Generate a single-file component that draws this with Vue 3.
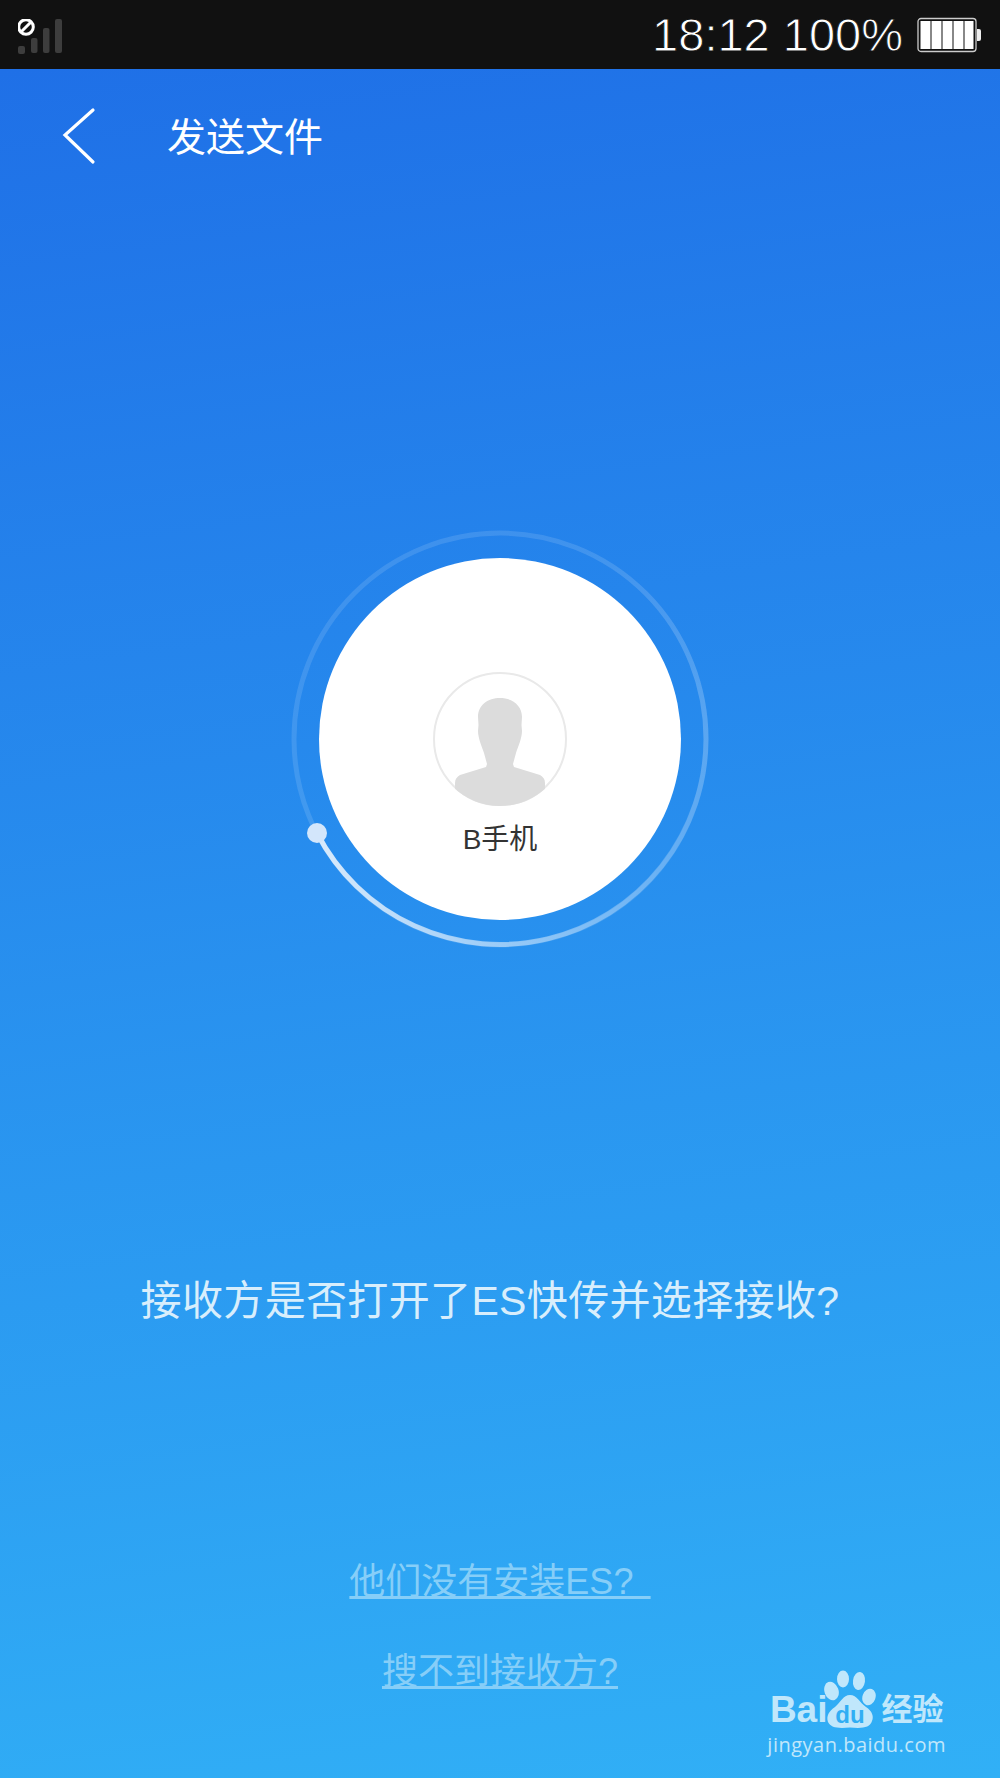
<template>
  <div class="screen">
    <div class="status-bar">
      <svg class="signal" width="60" height="50" viewBox="0 0 60 50">
        <rect x="0" y="27" width="7" height="8" rx="2" fill="#3d3d3d" />
        <rect x="13" y="19" width="6.500" height="15" rx="2" fill="#3d3d3d" />
        <rect x="25" y="9" width="6.500" height="25" rx="2" fill="#3d3d3d" />
        <rect x="37" y="0" width="7" height="34" rx="2" fill="#3d3d3d" />
        <circle cx="8" cy="8" r="7.300" fill="none" stroke="#fff" stroke-width="3" />
        <line x1="3.500" y1="12.500" x2="12.500" y2="3.500" stroke="#fff" stroke-width="3" />
      </svg>
      <div class="status-right">
        <span class="clock">18:12 100%</span>
        <svg class="battery" width="66" height="36" viewBox="0 0 66 36">
          <rect x="1" y="1.500" width="58" height="33" rx="3" fill="none" stroke="#ccc" stroke-width="1.300" />
          <rect x="3.500" y="4" width="10" height="28" fill="#fff" />
          <rect x="14.500" y="4" width="10" height="28" fill="#fff" />
          <rect x="25.500" y="4" width="10" height="28" fill="#fff" />
          <rect x="36.500" y="4" width="10" height="28" fill="#fff" />
          <rect x="47.500" y="4" width="9" height="28" fill="#fff" />
          <path d="M60 12h2a2 2 0 0 1 2 2v8a2 2 0 0 1-2 2h-2z" fill="#eee" />
        </svg>
      </div>
    </div>

    <div class="page">
      <div class="header">
        <svg class="back" width="34" height="58" viewBox="0 0 34 58">
          <path d="M31 3 L3 28 L31 55" fill="none" stroke="#fff" stroke-width="3.200" stroke-linecap="round" />
        </svg>
        <span class="title">发送文件</span>
      </div>

      <div class="dial">
        <svg class="dial-ring" width="430" height="430" viewBox="0 0 430 430">
          <defs>
            <linearGradient id="sweep" gradientUnits="userSpaceOnUse" x1="32" y1="0" x2="421" y2="0">
              <stop offset="0" stop-color="#fff" stop-opacity="0.8" />
              <stop offset="0.5" stop-color="#fff" stop-opacity="0.45" />
              <stop offset="1" stop-color="#fff" stop-opacity="0.14" />
            </linearGradient>
            <linearGradient id="fade" gradientUnits="userSpaceOnUse" x1="0" y1="215" x2="0" y2="9">
              <stop offset="0" stop-color="#fff" stop-opacity="0.14" />
              <stop offset="1" stop-color="#fff" stop-opacity="0" />
            </linearGradient>
          </defs>
          <circle cx="215" cy="215" r="206" fill="none" stroke="#fff" stroke-opacity="0.12" stroke-width="5" />
          <path d="M421 215 A206 206 0 0 0 215 9" fill="none" stroke="url(#fade)" stroke-width="5" />
          <path d="M32 309 A206 206 0 0 0 421 215" fill="none" stroke="url(#sweep)" stroke-width="5" />
          <circle cx="32" cy="309" r="10" fill="#d3e6fb" />
        </svg>
        <div class="disc">
          <svg width="134" height="134" viewBox="0 0 134 134">
            <defs>
              <clipPath id="avatarClip"><circle cx="67" cy="67" r="67" /></clipPath>
            </defs>
            <circle cx="67" cy="67" r="66" fill="none" stroke="#e9e9e9" stroke-width="2" />
            <path clip-path="url(#avatarClip)" fill="#dcdcdc" d="M67 26C79 26 89 33 89 45L88.500 53L89 59C89 66 85 75 83 81L80 92L81 95L107 103C110 105 112 107 112 111L112 134L22 134L22 111C22 107 24 105 27 103L53 95L54 92L51 81C49 75 45 66 45 59L45.500 53L45 45C45 33 55 26 67 26Z" />
          </svg>
          <span class="peer-name">B手机</span>
        </div>
      </div>

      <p class="question">接收方是否打开了ES快传并选择接收?</p>

      <div class="links">
        <a class="link">他们没有安装ES?&nbsp;&#8201;</a>
        <a class="link">搜不到接收方?</a>
      </div>

      <div class="watermark">
        <div class="wm-logo">
          <span class="wm-bai">Bai</span>
          <svg class="wm-paw" width="54" height="60" viewBox="0 0 54 60">
            <ellipse cx="7.500" cy="21" rx="7" ry="9.500" transform="rotate(-20 7.500 21)" fill="#c0e7fb" />
            <ellipse cx="19" cy="9" rx="6" ry="8.500" fill="#c0e7fb" />
            <ellipse cx="35" cy="11" rx="6" ry="9" transform="rotate(8 35 11)" fill="#c0e7fb" />
            <ellipse cx="45" cy="27" rx="6.500" ry="8.500" transform="rotate(20 45 27)" fill="#c0e7fb" />
            <path d="M26 25C33 25 36 33 42 37C48 41 50 46 48 51C46 58 38 58.500 26 57.500C14 58.500 7 58 4 52C2 46 5 41 11 37C17 32 19 25 26 25Z" fill="#c0e7fb" />
            <text x="26" y="53" text-anchor="middle" class="wm-du">du</text>
          </svg>
          <span class="wm-cn">经验</span>
        </div>
        <span class="wm-url">jingyan.baidu.com</span>
      </div>
    </div>
  </div>
</template>

<script setup>
</script>

<style>
html, body {
  margin: 0;
  background: #2a8fee;
}
</style>

<style scoped>
.screen {
  width: 1000px;
  height: 1778px;
  display: flex;
  flex-direction: column;
  overflow: hidden;
  font-family: "Liberation Sans", "Noto Sans CJK SC", sans-serif;
}

.status-bar {
  height: 69px;
  background: #111;
  display: flex;
  align-items: center;
  justify-content: space-between;
  padding: 0 18px;
  box-sizing: border-box;
}

.signal {
  margin-top: 19px;
}

.status-right {
  display: flex;
  align-items: center;
  gap: 14px;
}

.clock {
  color: #fff;
  font-size: 47px;
  line-height: 71px;
  -webkit-text-stroke: 0.9px #111;
}

.battery {
  margin-right: -1px;
}

.page {
  position: relative;
  flex: 1;
  background: linear-gradient(172deg, #1f70e7 0%, #31b0f6 100%);
}

.header {
  height: 134px;
  display: flex;
  align-items: center;
  padding-left: 62px;
}

.title {
  margin: 0 0 4px 71px;
  color: #fff;
  font-size: 39px;
}

.dial {
  position: relative;
  width: 430px;
  height: 430px;
  margin: 321px auto 0;
  display: flex;
  align-items: center;
  justify-content: center;
}

.dial-ring {
  position: absolute;
  inset: 0;
}

.disc {
  position: relative;
  width: 362px;
  height: 362px;
  border-radius: 50%;
  background: #fff;
  display: flex;
  flex-direction: column;
  align-items: center;
  padding-top: 114px;
  box-sizing: border-box;
}

.peer-name {
  margin-top: 16px;
  color: #333;
  font-size: 28px;
  line-height: 36px;
}

.question {
  margin: 317px 0 0;
  padding-right: 20px;
  text-align: center;
  color: #d8eefc;
  font-size: 41px;
  line-height: 60px;
  letter-spacing: 0.35px;
}

.links {
  margin-top: 226px;
  display: flex;
  flex-direction: column;
  align-items: center;
  gap: 40px;
}

.link {
  color: #86cef8;
  font-size: 36px;
  line-height: 50px;
  text-decoration: underline;
  white-space: pre;
}

.watermark {
  position: absolute;
  right: 54px;
  bottom: 18px;
  display: flex;
  flex-direction: column;
  align-items: center;
  color: #c0e7fb;
}

.wm-logo {
  display: flex;
  align-items: flex-end;
  height: 60px;
}

.wm-bai {
  font-size: 37px;
  font-weight: 700;
  line-height: 40px;
}

.wm-paw {
  margin: 0 3px 0 -3px;
}

.wm-du {
  font-family: "Liberation Sans", sans-serif;
  font-size: 24px;
  font-weight: 700;
  fill: #31aef4;
}

.wm-cn {
  font-size: 31px;
  font-weight: 700;
  line-height: 40px;
}

.wm-url {
  font-family: "Open Sans", sans-serif;
  font-size: 20px;
  line-height: 30px;
  letter-spacing: 0.5px;
}
</style>
